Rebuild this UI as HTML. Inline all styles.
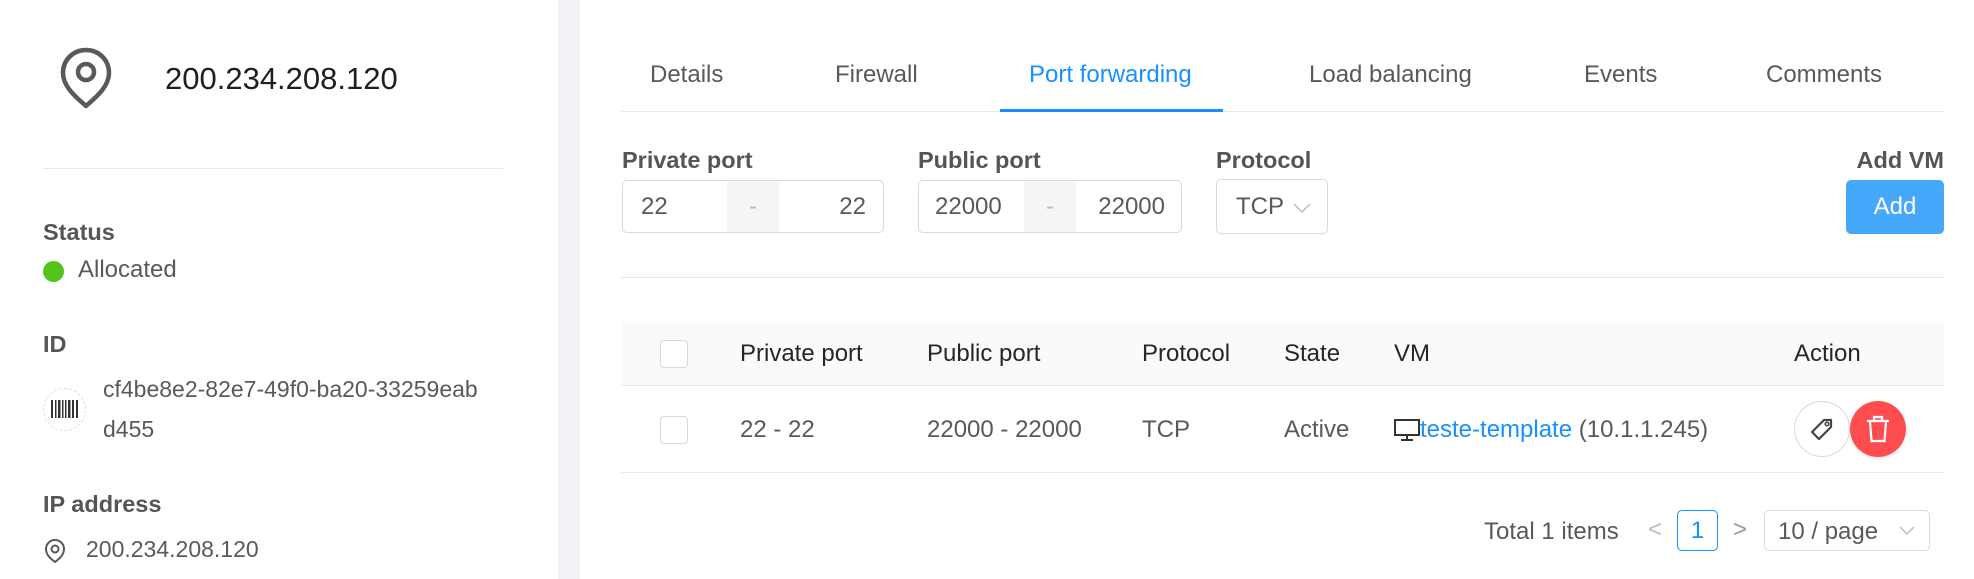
<!DOCTYPE html>
<html><head><meta charset="utf-8"><style>
*{margin:0;padding:0;box-sizing:border-box}
body{width:1974px;height:579px;background:#fff;font-family:"Liberation Sans",sans-serif;color:#595959;position:relative;overflow:hidden;font-size:24px}
.a{position:absolute;white-space:nowrap}
.lbl{font-weight:bold;color:#555;font-size:23.5px}
.th{color:#262626;font-size:24px}
.box{position:absolute;border:1px solid #d9d9d9;border-radius:5px;background:#fff}
</style></head><body>
<div class="a" style="left:558px;top:0;width:22px;height:579px;background:#f0f2f5"></div>

<svg class="a" style="left:58px;top:46px" width="56" height="64" viewBox="0 0 56 64"><path d="M28 4C15 4 5 14 5 27c0 14 14 25 23 33 9-8 23-19 23-33C51 14 41 4 28 4z" fill="none" stroke="#595959" stroke-width="4.5" stroke-linejoin="round"/><circle cx="28" cy="26" r="8" fill="none" stroke="#595959" stroke-width="4.5"/></svg>
<div class="a" style="left:165px;top:61px;font-size:31px;color:#1f1f1f">200.234.208.120</div>
<div class="a" style="left:43px;top:168px;width:460px;height:1px;background:#e8e8e8"></div>

<div class="a lbl" style="left:43px;top:219px">Status</div>
<div class="a" style="left:43px;top:261px;width:21px;height:21px;border-radius:50%;background:#52c41a"></div>
<div class="a" style="left:78px;top:256px">Allocated</div>

<div class="a lbl" style="left:43px;top:331px">ID</div>
<div class="a" style="left:43px;top:388px;width:43px;height:43px;border-radius:50%;border:1px dashed #ddd"></div>
<svg class="a" style="left:51px;top:400px" width="27" height="20" viewBox="0 0 27 20"><g fill="#333"><rect x="0" y="0" width="2" height="18"/><rect x="4" y="0" width="1.5" height="18"/><rect x="7" y="0" width="2.5" height="18"/><rect x="11" y="0" width="1.5" height="18"/><rect x="14" y="0" width="1.5" height="18"/><rect x="17" y="0" width="2.5" height="18"/><rect x="21" y="0" width="2" height="18"/><rect x="25" y="0" width="2" height="18"/></g></svg>
<div class="a" style="left:103px;top:369px;line-height:40px;white-space:normal;width:382px;word-break:break-all;font-size:23px">cf4be8e2-82e7-49f0-ba20-33259eabd455</div>

<div class="a lbl" style="left:43px;top:491px">IP address</div>
<svg class="a" style="left:44px;top:538px" width="22" height="26" viewBox="0 0 22 26"><path d="M11 2C6 2 2 6 2 11c0 6 5 10 9 13 4-3 9-7 9-13 0-5-4-9-9-9z" fill="none" stroke="#595959" stroke-width="2"/><circle cx="11" cy="11" r="3.5" fill="none" stroke="#595959" stroke-width="2"/></svg>
<div class="a" style="left:86px;top:536px;font-size:23px">200.234.208.120</div>

<!-- tabs -->
<div class="a" style="left:650px;top:61px">Details</div>
<div class="a" style="left:835px;top:61px">Firewall</div>
<div class="a" style="left:1029px;top:61px;color:#1890ff">Port forwarding</div>
<div class="a" style="left:1309px;top:61px">Load balancing</div>
<div class="a" style="left:1584px;top:61px">Events</div>
<div class="a" style="left:1766px;top:61px">Comments</div>
<div class="a" style="left:621px;top:111px;width:1323px;height:1px;background:#e8e8e8"></div>
<div class="a" style="left:1000px;top:109px;width:223px;height:3px;background:#1890ff"></div>

<!-- form -->
<div class="a lbl" style="left:622px;top:147px">Private port</div>
<div class="box" style="left:622px;top:180px;width:262px;height:53px;overflow:hidden">
 <div class="a" style="left:104px;top:0;width:52px;height:53px;background:#f5f5f5;color:#bbb;text-align:center;line-height:51px">-</div>
 <div class="a" style="left:18px;top:12px">22</div><div class="a" style="right:17px;top:12px">22</div></div>
<div class="a lbl" style="left:918px;top:147px">Public port</div>
<div class="box" style="left:918px;top:180px;width:264px;height:53px;overflow:hidden">
 <div class="a" style="left:105px;top:0;width:52px;height:53px;background:#f5f5f5;color:#bbb;text-align:center;line-height:51px">-</div>
 <div class="a" style="left:16px;top:12px">22000</div><div class="a" style="right:16px;top:12px">22000</div></div>
<div class="a lbl" style="left:1216px;top:147px">Protocol</div>
<div class="box" style="left:1216px;top:179px;width:112px;height:55px">
 <div class="a" style="left:19px;top:13px">TCP</div>
 <svg class="a" style="left:76px;top:23px" width="18" height="11" viewBox="0 0 18 11"><path d="M1 1l8 8 8-8" fill="none" stroke="#bbb" stroke-width="1.5"/></svg></div>
<div class="a lbl" style="right:30px;top:147px">Add VM</div>
<div class="a" style="left:1846px;top:180px;width:98px;height:54px;background:#45a8fa;border-radius:5px;color:#fff;text-align:center;line-height:54px;font-size:24px">Add</div>
<div class="a" style="left:621px;top:277px;width:1323px;height:1px;background:#e8e8e8"></div>

<!-- table -->
<div class="a" style="left:621px;top:321px;width:1323px;height:65px;background:#fafafa;border-bottom:1px solid #e8e8e8"></div>
<div class="a" style="left:660px;top:340px;width:28px;height:28px;border:1px solid #d9d9d9;border-radius:4px;background:#fff"></div>
<div class="a th" style="left:740px;top:340px">Private port</div>
<div class="a th" style="left:927px;top:340px">Public port</div>
<div class="a th" style="left:1142px;top:340px">Protocol</div>
<div class="a th" style="left:1284px;top:340px">State</div>
<div class="a th" style="left:1394px;top:340px">VM</div>
<div class="a th" style="left:1794px;top:340px">Action</div>

<div class="a" style="left:660px;top:416px;width:28px;height:28px;border:1px solid #d9d9d9;border-radius:4px"></div>
<div class="a" style="left:740px;top:416px">22 - 22</div>
<div class="a" style="left:927px;top:416px">22000 - 22000</div>
<div class="a" style="left:1142px;top:416px">TCP</div>
<div class="a" style="left:1284px;top:416px">Active</div>
<svg class="a" style="left:1394px;top:419px" width="26" height="22" viewBox="0 0 26 22"><rect x="1" y="1" width="24" height="15" fill="none" stroke="#333" stroke-width="2"/><path d="M13 16v4M7 21h12" stroke="#333" stroke-width="2"/></svg>
<div class="a" style="left:1420px;top:416px"><span style="color:#1890ff">teste-template</span> (10.1.1.245)</div>
<div class="a" style="left:1794px;top:401px;width:56px;height:56px;border-radius:50%;border:1px solid #d9d9d9;background:#fff"></div>
<svg class="a" style="left:1808px;top:415px" width="28" height="28" viewBox="0 0 28 28"><path d="M4 17L16 5h7v7L11 24z" fill="none" stroke="#444" stroke-width="2.2" stroke-linejoin="round"/><circle cx="19" cy="9" r="1.8" fill="none" stroke="#444" stroke-width="1.5"/></svg>
<div class="a" style="left:1850px;top:401px;width:56px;height:56px;border-radius:50%;background:#ff4d4f;box-shadow:0 2px 3px rgba(0,0,0,.1)"></div>
<svg class="a" style="left:1865px;top:415px" width="26" height="28" viewBox="0 0 26 28"><path d="M2 6h22M9 6V2h8v4M5 6l1.5 20h13L21 6" fill="none" stroke="#fff" stroke-width="2.2"/></svg>
<div class="a" style="left:621px;top:472px;width:1323px;height:1px;background:#e8e8e8"></div>

<!-- pagination -->
<div class="a" style="left:1484px;top:518px">Total 1 items</div>
<div class="a" style="left:1648px;top:516px;color:#bbb">&lt;</div>
<div class="a" style="left:1677px;top:510px;width:41px;height:41px;border:1px solid #1890ff;border-radius:5px;color:#1890ff;text-align:center;line-height:39px">1</div>
<div class="a" style="left:1733px;top:516px;color:#999">&gt;</div>
<div class="box" style="left:1764px;top:510px;width:166px;height:41px"><div class="a" style="left:13px;top:7px">10 / page</div>
<svg class="a" style="left:134px;top:15px" width="16" height="10" viewBox="0 0 16 10"><path d="M1 1l7 7 7-7" fill="none" stroke="#bbb" stroke-width="1.5"/></svg></div>
</body></html>
